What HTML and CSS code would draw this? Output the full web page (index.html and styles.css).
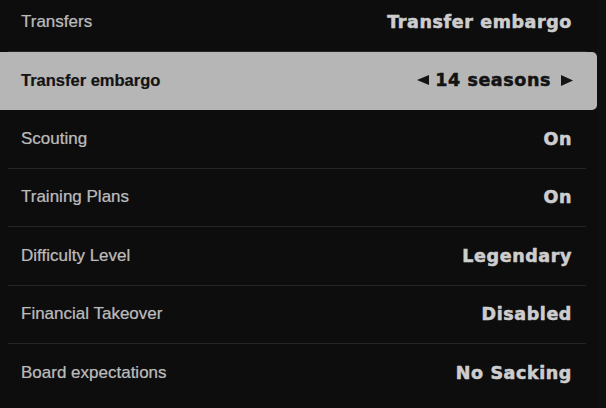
FILE: index.html
```html
<!DOCTYPE html>
<html>
<head>
<meta charset="utf-8">
<link rel="stylesheet" href="styles.css">
</head>
<body>
<div class="screen">
  <div class="list">
    <div class="row">
      <div class="row-inner"><span class="label">Transfers</span><span class="value">Transfer embargo</span></div>
    </div>
    <div class="row row-active">
      <div class="row-inner">
        <span class="label">Transfer embargo</span>
        <span class="picker">
          <svg class="arrow arrow-left" width="12" height="10" viewBox="0 0 12 10"><polygon points="0,5 12,0 12,10" fill="#141414"/></svg>
          <span class="value">14 seasons</span>
          <svg class="arrow arrow-right" width="12" height="11" viewBox="0 0 12 11"><polygon points="0,0 12,5.5 0,11" fill="#141414"/></svg>
        </span>
      </div>
    </div>
    <div class="row">
      <div class="row-inner"><span class="label">Scouting</span><span class="value">On</span></div>
    </div>
    <div class="row">
      <div class="row-inner"><span class="label">Training Plans</span><span class="value">On</span></div>
    </div>
    <div class="row">
      <div class="row-inner"><span class="label">Difficulty Level</span><span class="value">Legendary</span></div>
    </div>
    <div class="row">
      <div class="row-inner"><span class="label">Financial Takeover</span><span class="value">Disabled</span></div>
    </div>
    <div class="row row-last">
      <div class="row-inner"><span class="label">Board expectations</span><span class="value">No Sacking</span></div>
    </div>
  </div>
  <div class="track"></div>
</div>
</body>
</html>
```

FILE: styles.css
```css
html, body {
  margin: 0;
  padding: 0;
  background: #0d0d0d;
  overflow: hidden;
}

.screen {
  width: 606px;
  height: 408px;
  display: flex;
  overflow: hidden;
  background: #0d0d0d;
}

.list {
  width: 597px;
  margin-top: -7px;
  display: flex;
  flex-direction: column;
}

.track {
  flex: 1;
  background: #0f0f0f;
}

.row {
  height: 58.5px;
  padding: 0 11px 0 8px;
  box-sizing: border-box;
  flex: none;
}

.row-inner {
  height: 100%;
  box-sizing: border-box;
  border-bottom: 1px solid #262626;
  padding: 0 14px 0 13px;
  display: flex;
  align-items: center;
  justify-content: space-between;
}

.row-last .row-inner {
  border-bottom-color: transparent;
}

.label {
  font-family: "Liberation Sans", Arial, sans-serif;
  font-size: 17px;
  color: #bababa;
  -webkit-text-stroke: 0.15px #bababa;
  text-shadow: 0 0 1px rgba(186, 186, 186, 0.3);
}

.value {
  font-family: "DejaVu Sans", sans-serif;
  font-weight: bold;
  font-size: 17.5px;
  letter-spacing: 0.6px;
  color: #cdcdcd;
  -webkit-text-stroke: 0.5px #cdcdcd;
  text-shadow: 0 0 1px rgba(205, 205, 205, 0.3);
}

.row-active {
  background: #b6b6b6;
  border-radius: 0 5px 5px 0;
}

.row-active .row-inner {
  border-bottom-color: transparent;
}

.row-active .label {
  font-size: 16.5px;
  font-weight: bold;
  color: #131313;
  -webkit-text-stroke: 0.2px #131313;
  text-shadow: none;
}

.row-active .value {
  color: #131313;
  -webkit-text-stroke: 0.5px #131313;
  text-shadow: none;
}

.picker {
  display: flex;
  align-items: center;
}

.arrow-left {
  margin-right: 6px;
}

.arrow-right {
  margin-left: 10px;
  margin-right: -1px;
}
```
